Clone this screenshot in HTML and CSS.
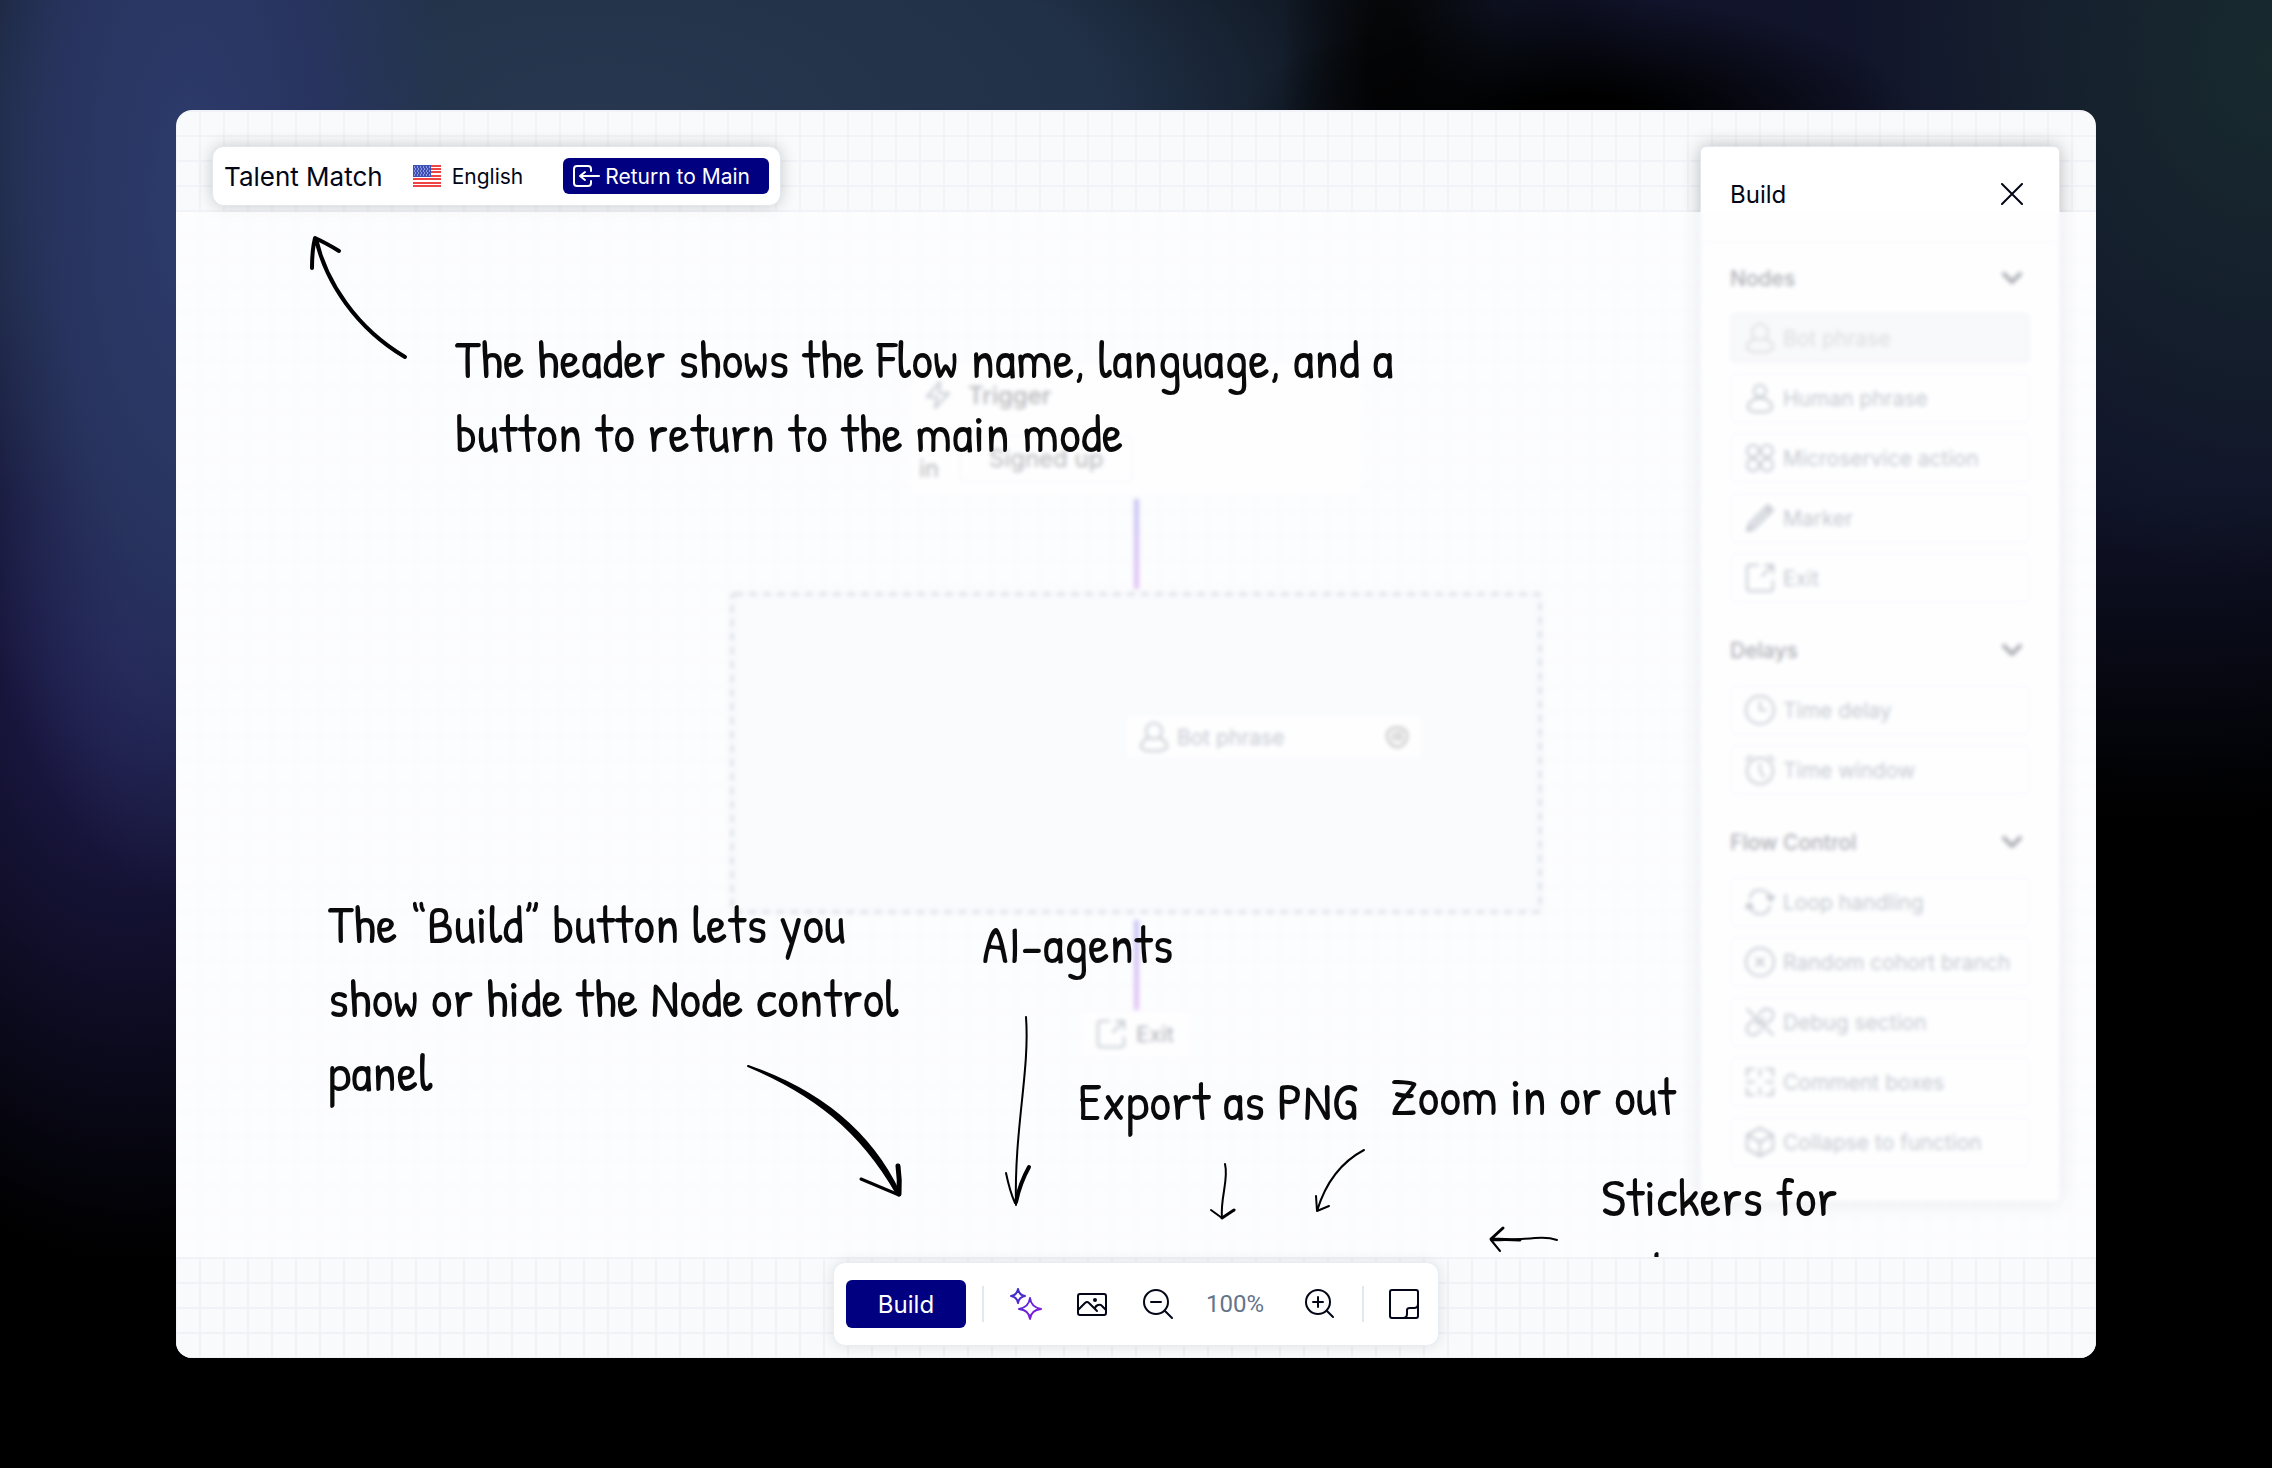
FILE: index.html
```html
<!DOCTYPE html>
<html lang="en">
<head>
<meta charset="utf-8">
<title>Talent Match</title>
<link rel="stylesheet" href="styles.css">
</head>
<body>
<svg class="sprite" aria-hidden="true">
  <symbol id="bot" viewBox="0 0 30 30"><circle cx="15" cy="9" r="8"/><path d="M9 16c-4 2-7 5-7 8 0 3 3 5 13 5s13-2 13-5c0-3-3-6-7-8"/></symbol>
  <symbol id="human" viewBox="0 0 30 30"><circle cx="15" cy="8" r="6"/><path d="M15 15c-7 0-12 5-12 9 0 3 2 5 12 5s12-2 12-5c0-4-5-9-12-9z"/></symbol>
  <symbol id="grid" viewBox="0 0 30 30"><circle cx="8" cy="8" r="6"/><circle cx="22" cy="8" r="6"/><circle cx="8" cy="22" r="6"/><circle cx="22" cy="22" r="6"/></symbol>
  <symbol id="marker" viewBox="0 0 30 30"><path d="M2 28l2-7L23 2l5 5L9 26zM20 5l5 5M4 26L25 5"/></symbol>
  <symbol id="exit" viewBox="0 0 30 30"><path d="M13 2H5a3 3 0 0 0-3 3v20a3 3 0 0 0 3 3h20a3 3 0 0 0 3-3v-7M17 13L28 2M20 2h8v8"/></symbol>
  <symbol id="clock" viewBox="0 0 30 30"><circle cx="15" cy="15" r="14"/><path d="M15 7v8h6"/></symbol>
  <symbol id="alarm" viewBox="0 0 30 30"><circle cx="15" cy="16" r="13"/><path d="M15 9v7l4 6M1 5l5-4M29 5l-5-4"/></symbol>
  <symbol id="loop" viewBox="0 0 30 30"><path d="M5 11c1-6 5-8 10-8s10 3 11 10M22 10l4 4 3-5zM25 19c-1 6-5 8-10 8S5 24 4 17M8 20l-4-4-3 5z"/></symbol>
  <symbol id="cohort" viewBox="0 0 30 30"><circle cx="15" cy="15" r="14"/><path d="M11 11l8 8M19 11l-8 8"/></symbol>
  <symbol id="debug" viewBox="0 0 30 30"><path d="M2 2l26 26M13 9l3-4c4-5 14-3 12 4-1 5-5 7-9 8M17 21l-3 4c-4 5-14 3-12-4 1-5 5-7 9-8M12 18l7-7"/></symbol>
  <symbol id="boxes" viewBox="0 0 30 30"><path d="M9 2H2v7M21 2h7v7M9 28H2v-7M21 28h7v-7M15 2v7M15 21v7M2 15h7M21 15h7"/></symbol>
  <symbol id="cube" viewBox="0 0 30 30"><path d="M15 1l13 7v14l-13 7-13-7V8zM2 8l13 7 13-7M15 15v14"/></symbol>
  <symbol id="chevron" viewBox="0 0 20 12"><path d="M2 2l8 8 8-8"/></symbol>
</svg>

<main class="stage">
  <section class="flow" aria-label="Flow">
    <article class="trigger">
      <div class="trigger-head">
        <svg class="bolt" viewBox="0 0 28 30" aria-hidden="true"><path d="M16 2L3 17h10l-2 11 14-15H15z"/></svg>
        <span>Trigger</span>
      </div>
      <div class="trigger-body"><span>in</span><span class="event">Signed up</span></div>
    </article>
    <div class="connector"></div>
    <div class="dropzone">
      <svg class="outline" aria-hidden="true"><rect x="2" y="2" width="806" height="316" rx="3"/></svg>
      <div class="dragged">
        <svg class="icon" aria-hidden="true"><use href="#bot"/></svg>
        <span>Bot phrase</span>
        <svg class="grab" viewBox="0 0 24 24" aria-hidden="true"><path d="M5 18C0 12 2 4 9 3c7-2 14 2 13 9-1 6-5 10-10 10-3 0-5-2-7-4zM8 13c0-4 3-5 7-5M10 14h6v-5"/></svg>
      </div>
    </div>
    <div class="connector"></div>
    <div class="exit-node"><svg class="icon" aria-hidden="true"><use href="#exit"/></svg><span>Exit</span></div>
  </section>

  <header class="topbar">
    <h1>Talent Match</h1>
    <div class="language">
      <svg class="flag" viewBox="0 0 28 22" aria-hidden="true">
        <rect width="28" height="22" fill="#fff" stroke="none"/>
        <path d="M0 1h28M0 4h28M0 7h28M0 11h28M0 14h28M0 18h28M0 21h28" stroke="#ef4444" stroke-width="2"/>
        <rect width="18" height="12" fill="#3f51b5" stroke="none"/>
        <path d="M1 2h16M2 4h15M1 6h16M2 8h15M1 10h16" stroke="#dbe2ff" stroke-width="1" stroke-dasharray="1 2"/>
      </svg>
      <span>English</span>
    </div>
    <button class="primary return" type="button">
      <svg viewBox="0 0 28 24" aria-hidden="true"><path d="M19 7V5q0-3-3-3H5Q2 2 2 5v14q0 3 3 3h11q3 0 3-3v-2M27 12H9M13 8l-5 4 5 4"/></svg>
      Return to Main
    </button>
  </header>

  <aside class="panel">
    <div class="panel-head">
      <h2>Build</h2>
      <button class="close" type="button" aria-label="Close"><svg viewBox="0 0 22 22"><path d="M1 1l20 20M21 1L1 21"/></svg></button>
    </div>
    <div class="groups">
      <section class="group">
        <h3>Nodes<svg class="chev" aria-hidden="true"><use href="#chevron"/></svg></h3>
        <button class="item" type="button" disabled><svg class="icon"><use href="#bot"/></svg>Bot phrase</button>
        <button class="item" type="button"><svg class="icon"><use href="#human"/></svg>Human phrase</button>
        <button class="item" type="button"><svg class="icon"><use href="#grid"/></svg>Microservice action</button>
        <button class="item" type="button"><svg class="icon"><use href="#marker"/></svg>Marker</button>
        <button class="item" type="button"><svg class="icon"><use href="#exit"/></svg>Exit</button>
      </section>
      <section class="group">
        <h3>Delays<svg class="chev" aria-hidden="true"><use href="#chevron"/></svg></h3>
        <button class="item" type="button"><svg class="icon"><use href="#clock"/></svg>Time delay</button>
        <button class="item" type="button"><svg class="icon"><use href="#alarm"/></svg>Time window</button>
      </section>
      <section class="group">
        <h3>Flow Control<svg class="chev" aria-hidden="true"><use href="#chevron"/></svg></h3>
        <button class="item" type="button"><svg class="icon"><use href="#loop"/></svg>Loop handling</button>
        <button class="item" type="button"><svg class="icon"><use href="#cohort"/></svg>Random cohort branch</button>
        <button class="item" type="button"><svg class="icon"><use href="#debug"/></svg>Debug section</button>
        <button class="item" type="button"><svg class="icon"><use href="#boxes"/></svg>Comment boxes</button>
        <button class="item" type="button"><svg class="icon"><use href="#cube"/></svg>Collapse to function</button>
      </section>
    </div>
  </aside>

  <div class="veil"></div>

  <p class="note note-header">The header shows the Flow name, language, and a<br>button to return to the main mode</p>
  <svg class="arrow arrow-header" viewBox="300 230 115 135" aria-hidden="true"><path stroke-width="4" d="M316 239C326 282 356 328 405 357M312 268Q312 250 315 238Q326 243 339 251"/></svg>

  <p class="note note-build">The “Build” button lets you<br>show or hide the Node control<br>panel</p>
  <svg class="arrow arrow-build" viewBox="740 1055 170 150" aria-hidden="true"><path fill="#000" stroke-width="2" d="M748 1066C812 1093 860 1129 897 1194L899 1192C870 1131 818 1090 748 1066z"/><path stroke-width="3" d="M861 1179L899 1195"/><path stroke-width="5" d="M899 1194Q900 1180 898 1166"/></svg>

  <p class="note note-agents">AI-agents</p>
  <svg class="arrow arrow-agents" viewBox="1000 1010 40 205" aria-hidden="true"><path stroke-width="2" d="M1026 1017C1030 1070 1014 1130 1016 1205M1006 1173Q1010 1192 1015 1203"/><path stroke-width="4" d="M1029 1167Q1020 1183 1016 1202"/></svg>

  <p class="note note-export">Export as PNG</p>
  <svg class="arrow arrow-export" viewBox="1205 1155 40 70" aria-hidden="true"><path stroke-width="2" d="M1225 1164C1229 1180 1220 1198 1222 1218M1211 1210L1222 1218"/><path stroke-width="3" d="M1222 1218L1234 1210"/></svg>

  <p class="note note-zoom">Zoom in or out</p>
  <svg class="arrow arrow-zoom" viewBox="1305 1140 70 80" aria-hidden="true"><path stroke-width="2" d="M1364 1150Q1330 1168 1317 1211M1316 1196L1317 1211L1329 1206"/></svg>

  <p class="note note-stickers">Stickers for<br>notes</p>
  <svg class="arrow arrow-stickers" viewBox="1480 1220 85 38" aria-hidden="true"><path stroke-width="2" d="M1557 1240C1540 1234 1520 1242 1491 1240L1500 1251"/><path stroke-width="3" d="M1520 1240L1491 1239L1503 1228"/></svg>

  <footer class="dock">
    <div class="toolbar">
      <button class="primary build" type="button">Build</button>
      <span class="rule"></span>
      <button class="tool" type="button" aria-label="AI agents">
        <svg viewBox="0 0 32 32"><defs><linearGradient id="spark" gradientUnits="userSpaceOnUse" x1="2" y1="2" x2="30" y2="30"><stop offset="0" stop-color="#3730c8"/><stop offset="1" stop-color="#8b1be2"/></linearGradient></defs>
        <path stroke="url(#spark)" d="M8 1q1 6 7 7q-6 1-7 7q-1-6-7-7q6-1 7-7zM20 10q1 9 11 11q-10 1-11 10q-1-9-11-10q10-2 11-11z"/></svg>
      </button>
      <button class="tool" type="button" aria-label="Export as PNG">
        <svg viewBox="0 0 32 32"><rect x="2" y="6" width="28" height="21" rx="2"/><path d="M2 22l7-7q2-2 4 0l8 8M19 21q0-3 3-4 3-1 4 1l4 4"/><circle cx="19" cy="12" r="1"/></svg>
      </button>
      <button class="tool" type="button" aria-label="Zoom out">
        <svg viewBox="0 0 32 32"><circle cx="14" cy="14" r="12"/><path d="M9 14h10M23 23l7 7"/></svg>
      </button>
      <output class="zoom">100%</output>
      <button class="tool zoom-in" type="button" aria-label="Zoom in">
        <svg viewBox="0 0 32 32"><circle cx="14" cy="14" r="12"/><path d="M9 14h10M14 9v10M23 23l6 6"/></svg>
      </button>
      <span class="rule"></span>
      <button class="tool" type="button" aria-label="Stickers">
        <svg viewBox="0 0 32 32"><rect x="2" y="2" width="28" height="28" rx="2"/><path d="M15 30q4 0 4-4v-4q0-2 3-2h4q4 0 4-4"/></svg>
      </button>
    </div>
  </footer>
</main>
</body>
</html>
```
FILE: styles.css
```css
* { box-sizing: border-box; }

body {
  margin: 0;
  min-height: 100vh;
  padding: 110px 176px;
  font-family: Inter, "Liberation Sans", sans-serif;
  color: #020617;
  background:
    radial-gradient(ellipse 340px 120px at 1580px 120px, #000 20%, transparent 100%),
    radial-gradient(ellipse 110px 240px at 1390px 60px, #050608 20%, transparent 100%),
    radial-gradient(ellipse 260px 700px at 190px 200px, #2d3b6c 0%, #28345f 50%, transparent 100%),
    radial-gradient(ellipse 1000px 460px at 600px 120px, #26374f 0%, #213148 50%, transparent 100%),
    radial-gradient(ellipse 400px 620px at 130px 640px, #231f58 0%, transparent 100%),
    radial-gradient(ellipse 420px 520px at 2272px 60px, #182a2e 0%, transparent 100%),
    radial-gradient(ellipse 860px 820px at 2160px 0, #14182f 0%, #101329 60%, transparent 100%),
    #000;
}

h1, h2, h3, p { margin: 0; font-weight: 400; }
button { margin: 0; padding: 0; border: 0; background: none; font: inherit; color: inherit; }
svg { display: block; fill: none; stroke: currentColor; stroke-width: 2; stroke-linecap: round; stroke-linejoin: round; }
.sprite { position: absolute; width: 0; height: 0; }

.stage {
  position: relative;
  display: flex;
  justify-content: space-between;
  align-items: flex-start;
  min-height: calc(100vh - 220px);
  padding: 36px 36px 156px;
  border-radius: 16px;
  overflow: hidden;
  background:
    linear-gradient(#f2f3f8 2px, transparent 2px) 0 0 / 24px 25px,
    linear-gradient(90deg, #f2f3f8 2px, transparent 2px) -1px 0 / 24px 25px,
    #f9fafc;
}

/* Flow canvas */
.flow {
  position: absolute;
  inset: 255px 0 auto;
  display: flex;
  flex-direction: column;
  align-items: center;
  font-size: 24px;
}
.trigger { width: 450px; height: 128px; padding: 6px 8px; background: #fff; }
.trigger-head { display: flex; align-items: center; gap: 16px; height: 48px; padding-left: 5px; }
.trigger-head span { font-weight: 500; color: #1c1c24; }
.bolt { width: 28px; height: 30px; color: #475569; }
.trigger-body { display: flex; align-items: flex-end; gap: 20px; height: 64px; line-height: 28px; color: #1c1c24; }
.event { padding: 8px 28px; border: 2px solid #e6e9ee; border-radius: 6px; }
.connector { width: 5px; height: 90px; margin: 6px 0 3px; background: linear-gradient(#5450dc, #b04be0); }
.dropzone {
  position: relative;
  display: flex;
  justify-content: flex-end;
  align-items: flex-start;
  width: 812px;
  height: 322px;
  padding: 124px 121px 0 0;
  background: #f1f4f8;
}
.outline { position: absolute; inset: 0; width: 812px; height: 322px; stroke: #a3adbd; stroke-width: 4; stroke-linecap: butt; stroke-dasharray: 8 6; }
.outline rect { width: 808px; height: 318px; }
.dragged { display: flex; align-items: center; gap: 8px; width: 294px; height: 42px; padding: 0 12px; background: #fff; font-size: 21px; color: #475569; }
.grab { width: 24px; height: 24px; margin-left: auto; color: #222; }
.exit-node { display: flex; align-items: center; gap: 10px; height: 42px; padding: 0 14px 0 12px; background: #fff; font-size: 22px; }
.exit-node .icon { color: #475569; }
.icon { width: 30px; height: 30px; flex: none; }

/* Top bar */
.topbar {
  display: flex;
  align-items: center;
  height: 60px;
  padding: 0 11px;
  border: 1px solid #e2e8f0;
  border-radius: 12px;
  background: #fff;
  box-shadow: 0 0 16px rgba(0, 0, 0, .2);
}
h1 { font-size: 26px; }
.language { display: flex; align-items: center; gap: 11px; margin: 0 40px 0 30px; font-size: 21px; }
.flag { width: 28px; height: 22px; stroke-linecap: butt; }
.primary { background: #000080; color: #fff; border-radius: 6px; }
.return { display: flex; align-items: center; gap: 5px; height: 36px; padding: 0 19px 0 9px; font-size: 21px; }
.return svg { width: 28px; height: 24px; }

/* Build panel */
.panel { width: 360px; border: 1px solid #e2e8f0; border-radius: 6px; background: #fff; box-shadow: 0 0 18px rgba(0, 0, 0, .25); }
.panel-head { display: flex; align-items: center; justify-content: space-between; height: 96px; padding: 0 36px 0 29px; border-bottom: 2px solid #eceef2; }
h2 { font-size: 24px; }
.close svg { width: 22px; height: 22px; }
.groups { display: flex; flex-direction: column; gap: 22px; padding: 10px 29px 34px; }
.group { display: flex; flex-direction: column; gap: 10px; }
h3 { display: flex; align-items: center; justify-content: space-between; height: 50px; padding-right: 8px; font-size: 21px; font-weight: 500; }
.chev { width: 20px; height: 12px; stroke-width: 4; }
.item { display: flex; align-items: center; gap: 8px; height: 50px; padding: 0 13px; border: 2px solid #e9ecf0; border-radius: 6px; font-size: 21px; color: #475569; }
.item:disabled { background: #edeef1; border-color: #dde0e4; color: #94989f; }

/* Frosted layer that dims the canvas below the notes */
.veil {
  position: absolute;
  inset: 102px 0 100px 0;
  background: rgba(253, 253, 255, .68);
  backdrop-filter: blur(2px);
}

/* Handwritten notes */
.note {
  position: absolute;
  font: 54px/74px "Patrick Hand", "Liberation Sans Narrow", "Open Sans", sans-serif;
  white-space: nowrap;
  color: #0a0a0a;
}
.note-header { left: 279px; top: 212px; }
.note-build { left: 152px; top: 777px; }
.note-agents { left: 806px; top: 797px; }
.note-export { left: 902px; top: 954px; }
.note-zoom { left: 1214px; top: 949px; }
.note-stickers { left: 1425px; top: 1050px; height: 98px; overflow: hidden; }

.arrow { position: absolute; color: #000; }
.arrow-header { left: 124px; top: 120px; width: 115px; height: 135px; }
.arrow-build { left: 564px; top: 945px; width: 170px; height: 150px; }
.arrow-agents { left: 824px; top: 900px; width: 40px; height: 205px; }
.arrow-export { left: 1029px; top: 1045px; width: 40px; height: 70px; }
.arrow-zoom { left: 1129px; top: 1030px; width: 70px; height: 80px; }
.arrow-stickers { left: 1304px; top: 1110px; width: 85px; height: 38px; }

/* Bottom toolbar */
.dock {
  position: absolute;
  inset: auto 0 0;
  display: flex;
  justify-content: center;
  align-items: flex-start;
  height: 101px;
  padding-top: 5px;
  background:
    linear-gradient(#f0f2f7 2px, transparent 2px) 0 0 / 24px 25px,
    linear-gradient(90deg, #f0f2f7 2px, transparent 2px) -1px 0 / 24px 25px,
    #f9fafc;
}
.toolbar {
  display: flex;
  align-items: center;
  height: 84px;
  padding: 0 8px 0 12px;
  border: 1px solid #e8edf4;
  border-radius: 12px;
  background: #fff;
  box-shadow: 0 0 14px rgba(0, 0, 0, .1);
}
.build { width: 120px; height: 48px; font-size: 24px; }
.rule { width: 2px; height: 36px; margin: 0 16px; background: #e2e8f0; }
.tool { padding: 0 10px; margin-right: 14px; }
.tool svg { width: 32px; height: 32px; }
.tool:last-child { margin-right: 0; }
.zoom { margin: 0 30px 0 8px; font: 24px Roboto, sans-serif; color: #64748b; }
.zoom-in { margin-right: 0; }
.zoom-in + .rule { margin-right: 14px; }
```
